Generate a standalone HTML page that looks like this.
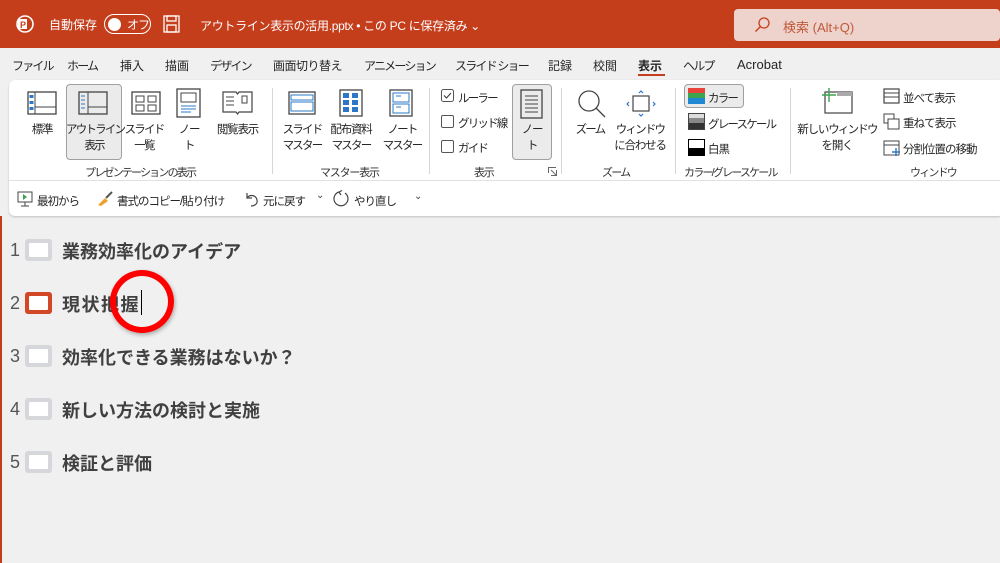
<!DOCTYPE html>
<html><head><meta charset="utf-8"><style>
*{box-sizing:border-box;margin:0;padding:0}
body{width:1000px;height:563px;overflow:hidden;background:#f0f0f0;font-family:"Liberation Sans","Noto Sans CJK JP",sans-serif;color:#262626;position:relative}
.a{position:absolute;white-space:nowrap}
.t{font-size:11.5px;letter-spacing:-1px}
.k{letter-spacing:-1.8px!important}
.tab{position:absolute;top:57px;font-size:12px;white-space:nowrap}
.title{left:0;top:0;width:1000px;height:48px;background:#c43e1c}
.ctr{text-align:center;font-size:11.5px;line-height:16px;letter-spacing:-1.2px}
.sep{position:absolute;top:88px;width:1px;height:86px;background:#d6d6d6}
.grp{font-size:11px;color:#333;letter-spacing:-1.2px}
.row{position:absolute;left:10px;font-size:18px;font-weight:bold;color:#404040}
.num{position:absolute;left:10px;font-size:18px;color:#555;font-weight:normal}
.bx{position:absolute;left:25px;width:27px;height:22px;background:#d5d7da;border-radius:3px}
.bx i{position:absolute;left:4px;top:4px;width:19px;height:14px;background:#fff;border-radius:1px}
</style></head><body>
<div class="a title"></div>
<svg class="a" style="left:15px;top:14px" width="20" height="20"><circle cx="10" cy="10" r="8" fill="none" stroke="#fff" stroke-width="1.6"/><rect x="3" y="5" width="9" height="10" fill="#fff"/><text x="5" y="14" font-size="9" font-weight="bold" fill="#c43e1c" font-family="Liberation Sans">P</text></svg>
<div class="a" style="left:49px;top:16px;font-size:12px;color:#fff">自動保存</div>
<div class="a" style="left:104px;top:14px;width:47px;height:20px;border:1.5px solid #fff;border-radius:10px"></div>
<div class="a" style="left:108px;top:18px;width:13px;height:13px;background:#fff;border-radius:50%"></div>
<div class="a" style="left:127px;top:16px;font-size:12px;color:#fff;letter-spacing:-1px">オフ</div>
<svg class="a" style="left:163px;top:15px" width="17" height="18"><rect x="1" y="1" width="15" height="16" fill="none" stroke="#fff" stroke-width="1.3"/><rect x="4" y="1" width="9" height="5" fill="none" stroke="#fff" stroke-width="1.3"/><rect x="4" y="10" width="9" height="7" fill="none" stroke="#fff" stroke-width="1.3"/></svg>
<div class="a" style="left:200px;top:17px;font-size:12px;color:#fff;letter-spacing:-0.3px">アウトライン表示の活用.pptx • この PC に保存済み ⌄</div>
<div class="a" style="left:734px;top:9px;width:266px;height:32px;background:#edd3cc;border-radius:4px"></div>
<svg class="a" style="left:754px;top:17px" width="16" height="16"><circle cx="10" cy="6" r="5" fill="none" stroke="#c43e1c" stroke-width="1.3"/><line x1="6.5" y1="9.5" x2="1.5" y2="14.5" stroke="#c43e1c" stroke-width="1.4"/></svg>
<div class="a" style="left:783px;top:17px;font-size:13px;color:#c0583a">検索 (Alt+Q)</div>
<div class="tab k" style="left:12px">ファイル</div>
<div class="tab k" style="left:67px">ホーム</div>
<div class="tab" style="left:120px">挿入</div>
<div class="tab" style="left:165px">描画</div>
<div class="tab k" style="left:210px">デザイン</div>
<div class="tab" style="left:273px;letter-spacing:-0.5px">画面切り替え</div>
<div class="tab k" style="left:364px">アニメーション</div>
<div class="tab k" style="left:455px">スライド ショー</div>
<div class="tab" style="left:548px">記録</div>
<div class="tab" style="left:593px">校閲</div>
<div class="tab" style="left:638px;font-weight:bold">表示</div>
<div class="a" style="left:638px;top:74px;width:27px;height:2px;background:#c43e1c"></div>
<div class="tab k" style="left:683px">ヘルプ</div>
<div class="tab" style="left:737px;font-size:13px">Acrobat</div>
<div class="a" style="left:9px;top:80px;width:995px;height:136px;background:#fff;border-radius:6px;box-shadow:0 1px 2px rgba(0,0,0,.2)"></div>
<div class="a" style="left:9px;top:180px;width:991px;height:1px;background:#e1e1e1"></div>
<div class="a" style="left:66px;top:84px;width:56px;height:76px;background:#ebebeb;border:1px solid #a0a0a0;border-radius:4px"></div>
<div class="a" style="left:512px;top:84px;width:40px;height:76px;background:#ebebeb;border:1px solid #a0a0a0;border-radius:4px"></div>
<svg class="a" style="left:27px;top:91px" width="30" height="25"><rect x="1" y="1" width="28" height="22" fill="none" stroke="#444" stroke-width="1.3"/><line x1="8" y1="1" x2="8" y2="23" stroke="#444"/><line x1="8" y1="16" x2="29" y2="16" stroke="#444"/><rect x="2.5" y="4" width="4" height="3" fill="#2b78c6"/><rect x="2.5" y="10" width="4" height="3" fill="#2b78c6"/><rect x="2.5" y="16" width="4" height="3" fill="#2b78c6"/></svg>
<svg class="a" style="left:78px;top:91px" width="30" height="25"><rect x="1" y="1" width="28" height="22" fill="none" stroke="#444" stroke-width="1.3"/><line x1="10" y1="1" x2="10" y2="23" stroke="#444"/><line x1="10" y1="16" x2="29" y2="16" stroke="#444"/><path d="M3 5h4M3 9h4M3 13h4M3 17h4" stroke="#2b78c6"/></svg>
<svg class="a" style="left:131px;top:91px" width="30" height="25"><rect x="1" y="1" width="28" height="22" fill="none" stroke="#444" stroke-width="1.3"/><rect x="5" y="5" width="8" height="6" fill="none" stroke="#444"/><rect x="17" y="5" width="8" height="6" fill="none" stroke="#444"/><rect x="5" y="14" width="8" height="6" fill="none" stroke="#444"/><rect x="17" y="14" width="8" height="6" fill="none" stroke="#444"/></svg>
<svg class="a" style="left:176px;top:88px" width="26" height="30"><rect x="1" y="1" width="23" height="28" fill="none" stroke="#444" stroke-width="1.3"/><rect x="5" y="5" width="15" height="9" fill="none" stroke="#444"/><path d="M5 18h15M5 21h15M5 24h10" stroke="#2b78c6"/></svg>
<svg class="a" style="left:222px;top:89px" width="31" height="27"><path d="M1 3h13l1.5 2 1.5-2h13v20h-13l-1.5 2-1.5-2H1z" fill="none" stroke="#444" stroke-width="1.2"/><path d="M4 8h8M4 12h8M4 16h8" stroke="#444"/><rect x="20" y="7" width="5" height="7" fill="none" stroke="#444"/></svg>
<svg class="a" style="left:288px;top:91px" width="28" height="24"><rect x="1" y="1" width="26" height="22" fill="none" stroke="#444" stroke-width="1.3"/><rect x="3" y="4" width="22" height="5" fill="none" stroke="#2b78c6"/><rect x="3" y="11" width="22" height="9" fill="none" stroke="#2b78c6"/></svg>
<svg class="a" style="left:339px;top:89px" width="24" height="28"><rect x="1" y="1" width="22" height="26" fill="none" stroke="#444" stroke-width="1.3"/><g fill="#2b78c6"><rect x="4" y="4" width="6" height="5"/><rect x="13" y="4" width="6" height="5"/><rect x="4" y="11" width="6" height="5"/><rect x="13" y="11" width="6" height="5"/><rect x="4" y="18" width="6" height="5"/><rect x="13" y="18" width="6" height="5"/></g></svg>
<svg class="a" style="left:389px;top:89px" width="24" height="28"><rect x="1" y="1" width="22" height="26" fill="none" stroke="#444" stroke-width="1.3"/><rect x="4" y="4" width="16" height="9" fill="none" stroke="#2b78c6"/><rect x="4" y="15" width="16" height="9" fill="none" stroke="#2b78c6"/><path d="M7 7h5M7 18h5" stroke="#2b78c6"/></svg>
<svg class="a" style="left:520px;top:89px" width="24" height="30"><rect x="1" y="1" width="21" height="28" fill="none" stroke="#444" stroke-width="1.3"/><path d="M5 7h13M5 11h13M5 15h13M5 19h13M5 23h13" stroke="#444"/></svg>
<svg class="a" style="left:575px;top:89px" width="32" height="30"><circle cx="14" cy="12" r="10" fill="none" stroke="#444" stroke-width="1.3"/><line x1="21" y1="19" x2="30" y2="28" stroke="#444" stroke-width="1.3"/></svg>
<svg class="a" style="left:625px;top:90px" width="32" height="28"><rect x="8" y="6" width="16" height="15" fill="none" stroke="#444" stroke-width="1.2"/><path d="M14 3l2-2 2 2M14 24l2 2 2-2M4 12l-2 2 2 2M28 12l2 2-2 2" fill="none" stroke="#2b78c6" stroke-width="1.2"/></svg>
<div class="a" style="left:684px;top:84px;width:60px;height:24px;background:#ebebeb;border:1px solid #a0a0a0;border-radius:4px"></div>
<svg class="a" style="left:688px;top:88px" width="17" height="16"><rect width="17" height="5" fill="#e8443a"/><rect y="5" width="17" height="5" fill="#3ca34f"/><rect y="10" width="17" height="6" fill="#1e88d3"/></svg>
<div class="a t k" style="left:708px;top:90px">カラー</div>
<svg class="a" style="left:688px;top:113px" width="17" height="17"><rect width="17" height="5" fill="#ddd"/><rect y="5" width="17" height="5" fill="#888"/><rect y="10" width="17" height="7" fill="#333"/><rect x=".5" y=".5" width="16" height="16" fill="none" stroke="#444"/></svg>
<div class="a t k" style="left:708px;top:116px">グレースケール</div>
<svg class="a" style="left:688px;top:139px" width="17" height="17"><rect width="17" height="9" fill="#fff"/><rect y="9" width="17" height="8" fill="#000"/><rect x=".5" y=".5" width="16" height="16" fill="none" stroke="#000"/></svg>
<div class="a t" style="left:708px;top:141px">白黒</div>
<svg class="a" style="left:820px;top:87px" width="34" height="28"><rect x="5" y="5" width="27" height="21" fill="none" stroke="#444" stroke-width="1.2"/><rect x="17" y="5" width="15" height="4" fill="#aaa"/><path d="M9 1v14M2 8h14" stroke="#3ca34f" stroke-width="1.4"/></svg>
<svg class="a" style="left:883px;top:88px" width="17" height="16"><rect x="1" y="1" width="15" height="14" fill="none" stroke="#444" stroke-width="1.2"/><line x1="1" y1="5" x2="16" y2="5" stroke="#444"/><line x1="1" y1="9" x2="16" y2="9" stroke="#444"/></svg>
<div class="a t" style="left:903px;top:90px">並べて表示</div>
<svg class="a" style="left:883px;top:113px" width="17" height="17"><rect x="1" y="1" width="10" height="9" fill="none" stroke="#444"/><rect x="5" y="6" width="11" height="10" fill="#fff" stroke="#444"/></svg>
<div class="a t" style="left:903px;top:115px">重ねて表示</div>
<svg class="a" style="left:883px;top:140px" width="18" height="17"><rect x="1" y="1" width="15" height="14" fill="none" stroke="#444"/><line x1="1" y1="5" x2="16" y2="5" stroke="#444"/><path d="M13 8v8M9 12h8" stroke="#2b78c6" stroke-width="1.4"/></svg>
<div class="a t" style="left:903px;top:141px">分割位置の移動</div>
<div class="a ctr" style="left:22px;top:122px;width:40px">標準</div>
<div class="a ctr k" style="left:66px;top:122px;width:56px">アウトライン<br>表示</div>
<div class="a ctr k" style="left:124px;top:122px;width:40px">スライド<br>一覧</div>
<div class="a ctr" style="left:169px;top:122px;width:40px">ノー<br>ト</div>
<div class="a ctr" style="left:210px;top:122px;width:55px">閲覧表示</div>
<div class="a ctr k" style="left:280px;top:122px;width:44px">スライド<br>マスター</div>
<div class="a ctr" style="left:326px;top:122px;width:50px">配布資料<br><span style="letter-spacing:-1.8px">マスター</span></div>
<div class="a ctr k" style="left:380px;top:122px;width:44px">ノート<br>マスター</div>
<div class="a ctr" style="left:512px;top:122px;width:40px">ノー<br>ト</div>
<div class="a ctr k" style="left:568px;top:122px;width:44px">ズーム</div>
<div class="a ctr" style="left:612px;top:122px;width:56px"><span style="letter-spacing:-1.8px">ウィンドウ</span><br>に合わせる</div>
<div class="a ctr" style="left:795px;top:122px;width:84px">新しい<span style="letter-spacing:-1.8px">ウィンドウ</span><br>を開く</div>
<svg class="a" style="left:441px;top:89px" width="13" height="13"><rect x=".5" y=".5" width="12" height="12" rx="2" fill="none" stroke="#555"/><path d="M3 6.5l2.5 2.5L10 4" fill="none" stroke="#333"/></svg>
<div class="a t k" style="left:458px;top:90px">ルーラー</div>
<div class="a" style="left:441px;top:115px;width:13px;height:13px;border:1px solid #555;border-radius:2px"></div>
<div class="a t k" style="left:458px;top:115px">グリッド線</div>
<div class="a" style="left:441px;top:140px;width:13px;height:13px;border:1px solid #555;border-radius:2px"></div>
<div class="a t k" style="left:458px;top:140px">ガイド</div>
<div class="a grp k" style="left:85px;top:164px">プレゼンテーションの表示</div>
<div class="a grp" style="left:320px;top:164px">マスター表示</div>
<div class="a grp" style="left:474px;top:164px">表示</div>
<svg class="a" style="left:548px;top:167px" width="9" height="9"><path d="M.5 6V.5h7.5M8.5 3v5.5H3" fill="none" stroke="#666"/><path d="M3 3l5 5" stroke="#666"/></svg>
<div class="a grp k" style="left:602px;top:164px">ズーム</div>
<div class="a grp k" style="left:684px;top:164px">カラー/グレースケール</div>
<div class="a grp k" style="left:910px;top:164px">ウィンドウ</div>
<div class="sep" style="left:272px"></div>
<div class="sep" style="left:429px"></div>
<div class="sep" style="left:561px"></div>
<div class="sep" style="left:675px"></div>
<div class="sep" style="left:790px"></div>
<svg class="a" style="left:17px;top:191px" width="16" height="16"><rect x="1" y="1" width="14" height="10" fill="none" stroke="#444"/><path d="M6 3l4 3-4 3z" fill="#3ca34f"/><path d="M8 11v4M4 15h8" stroke="#444"/></svg>
<div class="a t" style="left:37px;top:193px">最初から</div>
<svg class="a" style="left:96px;top:191px" width="18" height="16"><path d="M2 14l7-7 3 3-7 5z" fill="#f0a030"/><path d="M10 7l6-6" stroke="#555" stroke-width="2"/></svg>
<div class="a t" style="left:117px;top:193px">書式のコピー/貼り付け</div>
<svg class="a" style="left:243px;top:191px" width="16" height="16"><path d="M4 2v5h5" fill="none" stroke="#444" stroke-width="1.2"/><path d="M4 7c3-4 9-3 10 2s-4 6-6 6" fill="none" stroke="#444" stroke-width="1.2"/></svg>
<div class="a t" style="left:263px;top:193px">元に戻す</div>
<div class="a" style="left:316px;top:190px;font-size:10px;color:#444">⌄</div>
<svg class="a" style="left:333px;top:190px" width="18" height="18"><path d="M6 2A7 7 0 1 0 12 3" fill="none" stroke="#444" stroke-width="1.2"/><path d="M6 2l3-1.5M6 2l2 3" stroke="#444" stroke-width="1.2"/></svg>
<div class="a t" style="left:354px;top:193px">やり直し</div>
<div class="a" style="left:414px;top:191px;font-size:10px;color:#444">⌄</div>
<div class="a" style="left:0;top:216px;width:2px;height:347px;background:#c43e1c"></div>
<div class="num" style="top:240px">1</div><div class="bx" style="top:239px"><i></i></div><div class="row" style="left:62px;top:238px">業務効率化のアイデア</div>
<div class="num" style="top:293px">2</div><div class="bx" style="top:292px;background:#d24726"><i></i></div><div class="row" style="left:62px;top:291px;letter-spacing:1.5px">現状把握</div>
<div class="a" style="left:141px;top:290px;width:1px;height:25px;background:#000"></div>
<div class="a" style="left:110px;top:270px;width:64px;height:63px;border:6px solid #f00;border-radius:50%;box-shadow:1px 2px 4px rgba(0,0,0,.3)"></div>
<div class="num" style="top:346px">3</div><div class="bx" style="top:345px"><i></i></div><div class="row" style="left:62px;top:344px">効率化できる業務はないか？</div>
<div class="num" style="top:399px">4</div><div class="bx" style="top:398px"><i></i></div><div class="row" style="left:62px;top:397px">新しい方法の検討と実施</div>
<div class="num" style="top:452px">5</div><div class="bx" style="top:451px"><i></i></div><div class="row" style="left:62px;top:450px">検証と評価</div>
</body></html>
